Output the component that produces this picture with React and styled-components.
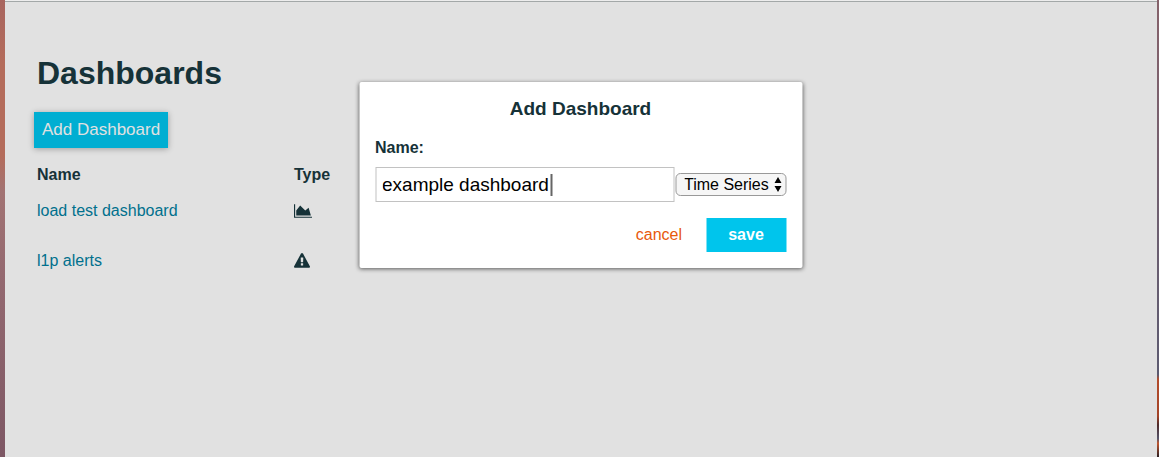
import React, { useState } from 'react';
import styled, { createGlobalStyle } from 'styled-components';

const GlobalStyle = createGlobalStyle`
  *, *::before, *::after { box-sizing: border-box; }
  html { height: 100%; }
  body {
    margin: 0;
    min-height: 100%;
    font-family: "Liberation Sans", Arial, sans-serif;
    font-size: 16px;
    line-height: 20px;
    color: #163238;
    background: linear-gradient(#a8655f, #b46c5b 14%, #b46c5b 34%, #a27373 42%, #946970 60%, #7d5764);
  }
  button, input, select { font-family: inherit; }
`;

const Desktop = styled.div`
  display: flex;
  min-height: 100vh;
`;

const Page = styled.main`
  flex: 1;
  min-width: 0;
  padding: 52px 32px 24px;
  background: #e1e1e1;
  border-top: 1px solid #a3a8a8;
  box-shadow: 0 -1px 0 #ededed;
  margin: 1px 0 0 5px;
`;

const DesktopEdge = styled.div`
  width: 2px;
  background: linear-gradient(#86626b, #6d5f70 50%, #5c5a70 82%, #b34c2c 83%, #a34428 91%, #4d2b2c 93%, #55556b 96%, #c05730 97%, #2b2024);
`;

const PageTitle = styled.h1`
  margin: 0;
  font-size: 32px;
  line-height: 38px;
  font-weight: bold;
`;

const AddButton = styled.button`
  margin: 20px 0 16px -3px;
  height: 36px;
  padding: 0 8px;
  border: 0;
  background: #00aed2;
  color: #e1e1e1;
  font-size: 17px;
  line-height: 20px;
  box-shadow: 0 1px 6px rgba(0, 0, 0, 0.3);
  display: block;
`;

const List = styled.table`
  border-collapse: collapse;
  table-layout: fixed;
  width: 400px;
  text-align: left;

  th, td { padding: 0; }
  th { height: 22px; font-size: 16px; }
  tbody td { height: 50px; }
`;

const Column = styled.col`
  width: ${(p) => p.$width};
`;

const RowLink = styled.a`
  color: #00708d;
  text-decoration: none;
`;

const Glyph = styled.svg`
  display: block;
  height: 16px;
  width: ${(p) => p.$width || '16px'};
  fill: currentColor;
`;

const IconButton = styled.button`
  display: block;
  padding: 0;
  border: 0;
  background: none;
  color: #163238;
`;

const Dialog = styled.form`
  position: absolute;
  top: 82px;
  left: 50%;
  transform: translateX(-50%);
  margin-left: 1px;
  width: 443px;
  max-width: 100%;
  padding: 16px;
  background: #fff;
  border-radius: 2px;
  box-shadow: 0 1px 4px rgba(0, 0, 0, 0.6);
`;

const DialogTitle = styled.h2`
  margin: 0 0 18px;
  text-align: center;
  font-size: 19px;
  line-height: 22px;
`;

const FieldLabel = styled.label`
  display: block;
  margin-bottom: 9px;
  font-weight: bold;
`;

const FieldRow = styled.div`
  display: flex;
  align-items: center;
  gap: 1px;
`;

const NameField = styled.div`
  position: relative;
  flex: 1;
  min-width: 0;
`;

const NameInput = styled.input`
  display: block;
  width: 100%;
  height: 35px;
  padding: 0 6px;
  border: 1px solid #c2c2c2;
  border-radius: 0;
  background: #fff;
  color: #000;
  font-size: 19px;
  outline: none;
  caret-color: transparent;
`;

const Caret = styled.span`
  position: absolute;
  top: 7px;
  left: 175px;
  width: 2px;
  height: 22px;
  background: #666;
`;

const TypeField = styled.div`
  position: relative;
  width: 111px;
`;

const TypeSelect = styled.select`
  display: block;
  appearance: none;
  width: 100%;
  height: 23px;
  padding: 0 8px;
  border: 1px solid #999;
  border-radius: 5px;
  background: #f6f6f6;
  color: #000;
  font-size: 16px;
  line-height: 20px;
`;

const SelectArrows = styled.svg`
  position: absolute;
  top: 4px;
  right: 4px;
  width: 9px;
  height: 15px;
  pointer-events: none;
`;

const Actions = styled.div`
  display: flex;
  justify-content: flex-end;
  gap: 24px;
  margin-top: 16px;
`;

const ActionButton = styled.button`
  height: 34px;
  border: 0;
  padding: 0;
  width: ${(p) => (p.$primary ? '80px' : 'auto')};
  background: ${(p) => (p.$primary ? '#00c5ec' : 'none')};
  color: ${(p) => (p.$primary ? '#fff' : '#e8590c')};
  font-weight: ${(p) => (p.$primary ? 'bold' : 'normal')};
  font-size: 16px;
  line-height: 20px;
`;

const AreaChartIcon = () => (
  <Glyph $width="18px" viewBox="0 0 2048 1792" role="img" aria-label="Time series">
    <path d="M2048 1536v128h-2048v-1536h128v1408h1920zm-384-1024l256 896h-1664v-576l448-576 576 576z" />
  </Glyph>
);

const WarningIcon = () => (
  <Glyph viewBox="0 0 1792 1792" role="img" aria-label="Alerts">
    <path d="M1024 1375v-190q0-14-9.5-23.5t-22.5-9.5h-192q-13 0-22.5 9.5t-9.5 23.5v190q0 14 9.5 23.5t22.5 9.5h192q13 0 22.5-9.5t9.5-23.5zm-2-374l18-459q0-12-10-19-13-11-24-11h-220q-11 0-24 11-10 7-10 21l17 457q0 10 10 16.5t24 6.5h185q14 0 23.5-6.5t10.5-16.5zm-14-934l768 1408q35 63-2 126-17 29-46.5 46t-63.5 17h-1536q-34 0-63.5-17t-46.5-46q-37-63-2-126l768-1408q17-31 47-49t65-18 65 18 47 49z" />
  </Glyph>
);

const TrashIcon = () => (
  <Glyph viewBox="0 0 16 16" aria-hidden="true">
    <path d="M1 3h3l1-2h4l1 2h3v1H1zM2 5h9v9l-1 1H3l-1-1z" />
  </Glyph>
);

const dashboards = [
  { name: 'load test dashboard', Icon: AreaChartIcon },
  { name: 'l1p alerts', Icon: WarningIcon },
];

export default function App() {
  const [name, setName] = useState('example dashboard');
  return (
    <>
      <GlobalStyle />
      <Desktop>
        <Page>
          <PageTitle>Dashboards</PageTitle>
          <AddButton type="button">Add Dashboard</AddButton>
          <List>
            <colgroup>
              <Column $width="257px" />
              <Column $width="82px" />
              <Column $width="61px" />
            </colgroup>
            <thead>
              <tr>
                <th scope="col">Name</th>
                <th scope="col">Type</th>
                <td />
              </tr>
            </thead>
            <tbody>
              {dashboards.map(({ name: title, Icon }) => (
                <tr key={title}>
                  <td><RowLink href="#">{title}</RowLink></td>
                  <td><Icon /></td>
                  <td>
                    <IconButton type="button" aria-label={`Delete ${title}`}><TrashIcon /></IconButton>
                  </td>
                </tr>
              ))}
            </tbody>
          </List>
        </Page>
        <DesktopEdge />
      </Desktop>
      <Dialog role="dialog" aria-labelledby="dialog-title" onSubmit={(e) => e.preventDefault()}>
        <DialogTitle id="dialog-title">Add Dashboard</DialogTitle>
        <FieldLabel htmlFor="dashboard-name">Name:</FieldLabel>
        <FieldRow>
          <NameField>
            <NameInput id="dashboard-name" value={name} onChange={(e) => setName(e.target.value)} />
            <Caret />
          </NameField>
          <TypeField>
            <TypeSelect aria-label="Type" defaultValue="series">
              <option value="series">Time Series</option>
              <option value="alerts">Alerts</option>
            </TypeSelect>
            <SelectArrows viewBox="0 0 9 15" aria-hidden="true">
              <path d="M4.500 0L8 6H1zM4.500 15L8 9H1z" />
            </SelectArrows>
          </TypeField>
        </FieldRow>
        <Actions>
          <ActionButton type="button">cancel</ActionButton>
          <ActionButton type="submit" $primary>save</ActionButton>
        </Actions>
      </Dialog>
    </>
  );
}
